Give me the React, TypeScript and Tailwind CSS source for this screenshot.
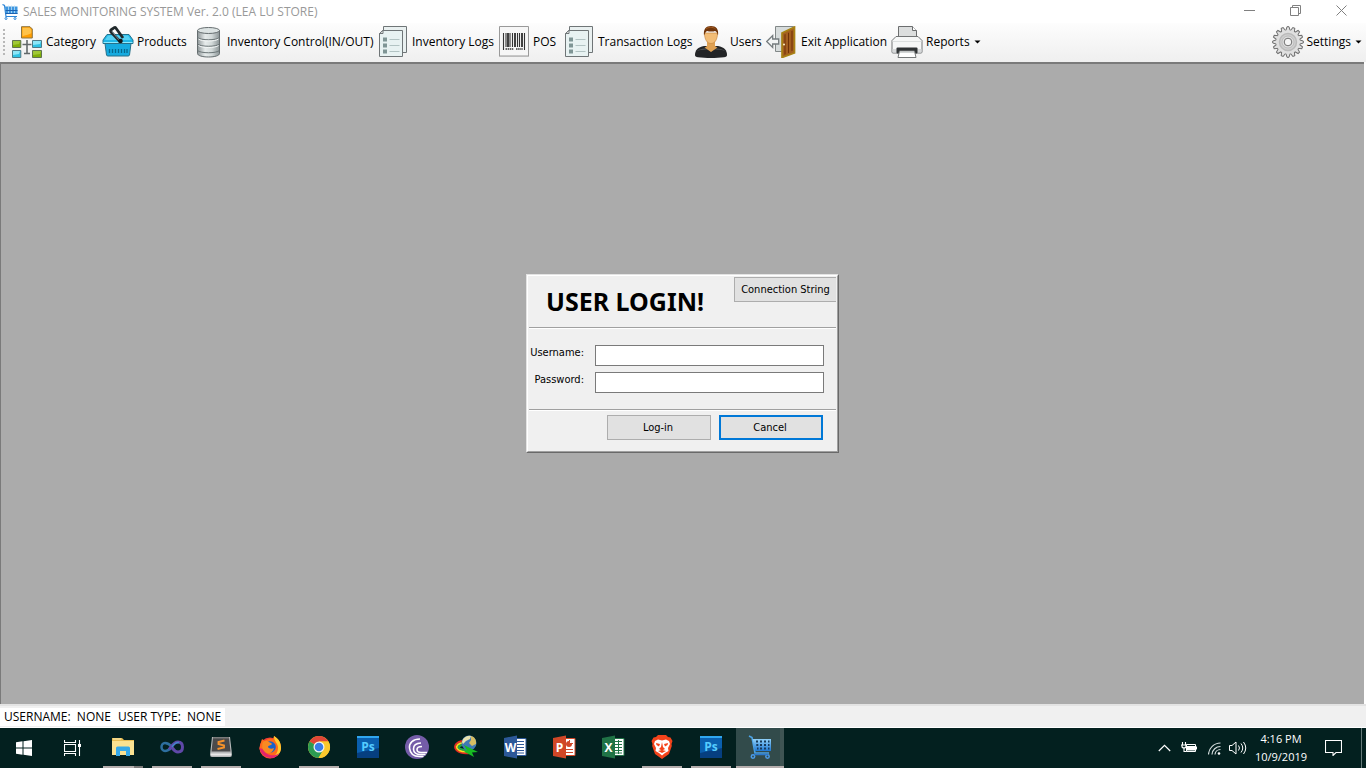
import { useId } from "react";
import type { ReactNode } from "react";

function CartIcon({ size }: { size: number }) {
  const id = useId();
  return (
    <svg width={size} height={size} viewBox="0 0 24 24" fill="none" aria-hidden="true">
      <defs>
        <linearGradient id={id} x1="0" y1="0" x2="0" y2="1">
          <stop offset="0" stopColor="#8fd0f8" />
          <stop offset="1" stopColor="#1f78d4" />
        </linearGradient>
      </defs>
      <path d="M1 1l3 1.500 3 15.500H21" stroke="#4ba3e6" strokeWidth="1.600" />
      <path fill={`url(#${id})`} d="M4.500 4H23v12H6.800z" />
      <path
        d="M8 6.500h2M12 6.500h2M16 6.500h2M20 6.500h1.500M8.300 10h2M12 10h2M16 10h2M20 10h1.500M9 13.500h1.500M12 13.500h2M16 13.500h2M20 13.500h1.500"
        stroke="#173a5c"
        strokeWidth="1.800"
      />
      <circle cx="5" cy="21.500" r="1.700" stroke="#4b9be8" strokeWidth="1.500" />
      <circle cx="19.500" cy="21.500" r="1.700" stroke="#4b9be8" strokeWidth="1.500" />
      <path d="M6 19.500h14" stroke="#2d78ca" strokeWidth="1.500" />
    </svg>
  );
}

function TitleCart() {
  return (
    <svg width="16" height="16" viewBox="0 0 16 16" fill="none" aria-hidden="true">
      <path d="M.5.500l2 1 1.500 11h11" stroke="#2f86d6" strokeWidth="1.200" />
      <path d="M3 2.500h12.500V10H4z" fill="#3f97e0" />
      <path d="M6.500 1.500V10M9.500 1.500V10M12.500 1.500V10" stroke="#b9dcf6" strokeWidth=".8" />
      <path d="M3.500 6.500h12M3.500 9.500h12" stroke="#1d62b0" />
      <circle cx="4" cy="14.500" r="1" stroke="#2f86d6" />
      <circle cx="13" cy="14.500" r="1" stroke="#2f86d6" />
    </svg>
  );
}

function CategoryIcon() {
  return (
    <svg width="32" height="32" viewBox="0 0 32 32" aria-hidden="true">
      <path d="M16 14v14M11.500 18.500h9M13 27.500h6" stroke="#63696b" strokeWidth="1.600" fill="none" />
      <path d="M10.500.700h8.500l2.300 2.300v9h-10.800z" fill="#ff9d00" stroke="#8d7440" />
      <path d="M11.500 1.700h7l1.800 2v3.500c-3 2-6 1.500-8.800 3z" fill="#ffc34a" />
      <g stroke="#5f7350">
        <path d="M1.500 14.500h8.300v7H1.500zM21.500 24.500h9v7h-9z" fill="#7fae08" />
      </g>
      <path d="M2 15h7l-1 3-6 1zM22 25h8l-1 3-7 1z" fill="#9fc836" />
      <g stroke="#4d7a88">
        <path d="M21.500 14.500h9v7h-9zM1.500 24.500h8.300v7H1.500z" fill="#2fc2e4" />
      </g>
      <path d="M22 15h8l-1 3-7 1zM2 25h7l-1 3-6 1z" fill="#8ce6f8" />
    </svg>
  );
}

function BasketIcon() {
  return (
    <svg width="32" height="32" viewBox="0 0 32 32" aria-hidden="true">
      <path d="M5 8.500h22l4 5.500v3.500H1V14z" fill="#20b6e6" stroke="#22738f" />
      <path d="M6 9.500h20l3 4.500H3z" fill="#56d1f3" />
      <path d="M3 17.500h26L27.500 29q-.2 1-1.500 1H6q-1.300 0-1.500-1z" fill="#16abe0" stroke="#27718a" />
      <path d="M1.500 16.500h29" stroke="#8beaff" />
      <path d="M7.500 23v4M10.500 23v4M13.500 23v4M16.500 23v4M19.500 23v4M22.500 23v4M25 23v4" stroke="#07698e" strokeWidth="1.300" />
      <path d="M18 15.500L9 6q-1-1.500.5-2.500L12 1.800q1.200-.7 2 .4L21 12" fill="none" stroke="#20282b" strokeWidth="2.800" strokeLinejoin="round" />
      <path d="M10 5.500l7 8.500" stroke="#75848a" />
      <circle cx="18.500" cy="15" r="2.300" fill="#17191a" />
    </svg>
  );
}

function DatabaseIcon() {
  const id = useId();
  return (
    <svg width="32" height="32" viewBox="0 0 32 32" aria-hidden="true">
      <defs>
        <linearGradient id={id}>
          <stop offset="0" stopColor="#8f9799" />
          <stop offset=".35" stopColor="#e6ebeb" />
          <stop offset=".65" stopColor="#d2d9d9" />
          <stop offset="1" stopColor="#8b9496" />
        </linearGradient>
      </defs>
      <path d="M5.500 4.500v23C5.500 29.500 10 31 16.500 31s11-1.500 11-3.500v-23z" fill={`url(#${id})`} stroke="#656d6f" />
      <ellipse cx="16.500" cy="4.500" rx="11" ry="3" fill="#dce3e3" stroke="#656d6f" />
      <path d="M5.500 11.500c3 3 19 3 22 0M5.500 18c3 3 19 3 22 0M5.500 24.500c3 3 19 3 22 0" fill="none" stroke="#6a7476" />
      <path d="M6.500 13c3 2.700 17 2.700 20 0M6.500 19.500c3 2.700 17 2.700 20 0" fill="none" stroke="#f3f6f6" />
    </svg>
  );
}

function LogsIcon() {
  return (
    <svg width="32" height="32" viewBox="0 0 32 32" aria-hidden="true">
      <path d="M6.500.500h23v26h-23z" fill="#e9f0f0" stroke="#6f7577" />
      <path d="M5.500 4.500h20v26h-23V7.500z" fill="#e8f2f2" stroke="#6f7577" />
      <path d="M2.500 7.500l3.500-3v3z" fill="#fff" stroke="#6f7577" />
      <path d="M6 11.500h4v4H6zM6 17.500h4v4H6zM6 23.500h4v4H6z" fill="#7f9595" />
      <path d="M12.500 13.500h10M12.500 19.500h10M12.500 25.500h10" stroke="#b2c3c3" />
    </svg>
  );
}

function BarcodeIcon() {
  return (
    <svg width="32" height="32" viewBox="0 0 32 32" aria-hidden="true">
      <path d="M1.500.500h29v29.500h-29z" fill="#f6f6f6" stroke="#999" />
      <path d="M1 30.500h30" stroke="#bbb" />
      <path d="M5.500 7v17M8 7v14M12 7v14M14.500 7v14M19.500 7v14M21.500 7v14M26.500 7v17" stroke="#333" strokeWidth="1.100" />
      <path d="M10 7v14M17 7v14M24 7v14" stroke="#222" strokeWidth="1.700" />
      <path d="M7.500 23h8M18 23h7" stroke="#666" strokeWidth="2" strokeDasharray="1.500 .6" />
    </svg>
  );
}

function UserIcon() {
  return (
    <svg width="32" height="32" viewBox="0 0 32 32" aria-hidden="true">
      <path d="M0 29c0-5 3-8 9-9h14c6 1 9 4 9 9 0 1.500-1 2-3 2.300-8 .9-18 .9-26 0C1 31 0 30.500 0 29z" fill="#222426" />
      <path d="M2 25c4-4 24-4 28 0-4-2-24-2-28 0z" fill="#4d5053" />
      <path d="M12 15h8v5c1 1 1.500 1.200 2.500 1.500L16 26l-6.500-4.500c1-.3 1.500-.5 2.500-1.500z" fill="#dfa153" />
      <path d="M9.500 7c0 7 3 10.500 6.500 10.500S22.500 14 22.500 7z" fill="#f2bd77" stroke="#c88a43" strokeWidth=".7" />
      <path d="M9 9.500C8.200 3 11 0 16 0s8 3 7 9.500c-1-3-1.500-4-3-4.500-2 1-6 .500-8 0-1.500 1-2 2-3 4.500z" fill="#70350b" />
      <path d="M11 3c2-2 7-2.500 9.500 0" stroke="#a35b20" fill="none" />
    </svg>
  );
}

function DoorIcon() {
  return (
    <svg width="32" height="32" viewBox="0 0 32 32" aria-hidden="true">
      <path d="M9.500.500h18v25h-18z" fill="#d7dcdc" stroke="#828888" />
      <path d="M.7 15.500l6-6v3.500h6v5h-6v3.500z" fill="#f2f4f4" stroke="#747b7d" strokeWidth="1.300" />
      <path d="M16 7L28.500 1v26L16 31.500z" fill="#a45f20" stroke="#a88214" strokeWidth="1.700" />
      <path d="M18.500 8.500l1-.5v20.300l-1 .4zM22 7l1-.5v20.300l-1 .4zM25.500 5l1-.5v20.300l-1 .4z" fill="#6f3108" />
      <circle cx="18" cy="18.500" r="1" fill="#fff5c4" />
    </svg>
  );
}

function PrinterIcon() {
  return (
    <svg width="32" height="32" viewBox="0 0 32 32" aria-hidden="true">
      <path d="M7.500.500h14l4 4v8h-18z" fill="#dcdede" stroke="#6b6d6e" />
      <path d="M21.500.500v4h4" fill="#fff" stroke="#6b6d6e" />
      <path d="M5 10.500h22l4 4V26q0 1-1 1H2q-1 0-1-1V14.500z" fill="#f6f7f7" stroke="#737576" strokeLinejoin="round" />
      <path d="M1.500 15.500h29" stroke="#dcdfdf" />
      <path d="M1.500 23h29v3.500h-29z" fill="#d7d9da" />
      <rect x="5.500" y="21.500" width="21" height="6" rx="1" fill="#303335" />
      <path d="M8.500 25h15l1.500 6.500H7z" fill="#fff" stroke="#76797a" />
      <path d="M9 26h14" stroke="#c5c8c8" strokeWidth="1.500" />
    </svg>
  );
}

const gearTeeth = Array.from({ length: 16 }, (_, i) => i * 22.5);

function GearIcon() {
  return (
    <svg width="32" height="32" viewBox="0 0 32 32" aria-hidden="true">
      {gearTeeth.map((a) => (
        <path key={a} d="M13.800 4.800L15 .700h2l1.200 4.100" fill="#dfdfdf" stroke="#6f6f6f" transform={`rotate(${a} 16 16)`} />
      ))}
      <circle cx="16" cy="16" r="11.800" fill="#dfdfdf" />
      <circle cx="16" cy="16" r="8.500" fill="#cfcfcf" stroke="#bababa" strokeWidth="1.500" />
      <circle cx="16" cy="16" r="6" fill="#dedede" stroke="#b0b0b0" strokeWidth=".7" />
      <circle cx="16" cy="16" r="3.800" fill="#f5f5f5" stroke="#6f6f6f" />
    </svg>
  );
}

function Caret() {
  return (
    <svg className="ml-1" width="7" height="4" viewBox="0 0 7 4" aria-hidden="true">
      <path d="M.5.500h6l-3 3z" fill="#000" />
    </svg>
  );
}

function ToolButton({ icon, label, width, caret }: { icon: ReactNode; label: string; width: string; caret?: boolean }) {
  return (
    <button type="button" className={`flex h-8 shrink-0 items-center whitespace-nowrap text-left ${width}`}>
      <span className="mr-[3px] shrink-0">{icon}</span>
      {label}
      {caret && <Caret />}
    </button>
  );
}

const tools = [
  { label: "Category", icon: <CategoryIcon />, width: "w-[91px]" },
  { label: "Products", icon: <BasketIcon />, width: "w-[90px]" },
  { label: "Inventory Control(IN/OUT)", icon: <DatabaseIcon />, width: "w-[185px]" },
  { label: "Inventory Logs", icon: <LogsIcon />, width: "w-[121px]" },
  { label: "POS", icon: <BarcodeIcon />, width: "w-[65px]" },
  { label: "Transaction Logs", icon: <LogsIcon />, width: "w-[132px]" },
  { label: "Users", icon: <UserIcon />, width: "w-[71px]" },
  { label: "Exit Application", icon: <DoorIcon />, width: "w-[125px]" },
];

function PhotoshopIcon() {
  return (
    <svg width="22" height="22" viewBox="0 0 22 22" aria-hidden="true">
      <path d="M0 0h22v22H0z" fill="#063f80" />
      <path d="M0 0h22v12L0 17z" fill="#0a5fae" />
      <path d="M0 1h22" stroke="#30a6ee" strokeWidth="2" />
      <text x="11" y="15" textAnchor="middle" fontSize="12" fontWeight="bold" fontFamily="'Open Sans', sans-serif" fill="#55ccff">Ps</text>
    </svg>
  );
}

function OfficeIcon({ letter, dark, children }: { letter: string; dark: string; children: ReactNode }) {
  return (
    <svg width="24" height="24" viewBox="0 0 24 24" aria-hidden="true">
      <path d="M12 3.500h11v17H12z" fill="#fff" stroke={dark} />
      {children}
      <path d="M1 3l13-2.500v23L1 21z" fill={dark} />
      <text x="7.500" y="16.500" textAnchor="middle" fontSize="12" fontWeight="bold" fontFamily="'Open Sans', sans-serif" fill="#fff">{letter}</text>
    </svg>
  );
}

const taskApps: { name: string; icon: ReactNode; running?: boolean; stacked?: boolean; active?: boolean }[] = [
  {
    name: "File Explorer",
    running: true,
    stacked: true,
    icon: (
      <svg width="22" height="20" viewBox="0 0 22 20" aria-hidden="true">
        <path d="M0 1h10l2 2h10v15H0z" fill="#e9bd52" />
        <path d="M0 4h22v14H0z" fill="#fbe291" />
        <path d="M1 2h8" stroke="#fff2bd" />
        <path d="M4 19v-8q0-1.500 1.500-1.500h11q1.500 0 1.500 1.500v8h-4v-5H8v5z" fill="#36a9e8" />
      </svg>
    ),
  },
  {
    name: "Visual Studio",
    running: true,
    icon: (
      <svg width="24" height="14" viewBox="0 0 24 14" fill="none" aria-hidden="true">
        <path d="M12 7C9 3.500 7 3 5 3 2.800 3 1.500 5 1.500 7S3 11 5 11c3 0 5-2 7-4" stroke="#2d6f9f" strokeWidth="2.500" />
        <path d="M9 9.500C11.500 7 13 2 18 2c3 0 4.500 2.200 4.500 5S21 12 18 12c-4 0-5-3.500-7-6" stroke="#5f48a8" strokeWidth="3" />
        <path d="M12 7c2-3 4-5 7-4.500" stroke="#4384cc" strokeWidth="1.500" />
      </svg>
    ),
  },
  {
    name: "Sublime Text",
    running: true,
    icon: (
      <svg width="24" height="22" viewBox="0 0 24 22" aria-hidden="true">
        <path d="M3 1h18l2 17.500q0 2.500-2 2.500H3q-2 0-2-2.500z" fill="#b7b9ba" />
        <path d="M4 1.500h16l1.500 14h-19z" fill="#4a4a4b" />
        <path d="M4 2h16" stroke="#777" />
        <path d="M2 18.500h20" stroke="#e8e8e8" strokeWidth="2" />
        <path d="M15.500 4.500L9.500 6v2l5.500 1.500v2L8.500 13" fill="none" stroke="#f7932a" strokeWidth="1.900" />
      </svg>
    ),
  },
  {
    name: "Firefox",
    icon: (
      <svg width="24" height="24" viewBox="0 0 24 24" aria-hidden="true">
        <circle cx="12" cy="13" r="10.500" fill="#f33b38" />
        <path d="M3 7l1-3 3 2c3-3 6-3 8-2l1-3c5 3 7 7 7 12 0 5-4 9-9 10C7 24 2 19 1.500 13z" fill="#ff6a1b" />
        <path d="M16 1c5 3 7 7 7 12s-4 9-8 9c3-2 5-5 5-9 0-5-4-6-4-12z" fill="#ffcb2e" />
        <circle cx="12" cy="12" r="5.800" fill="#1862cd" />
        <path d="M5 7c2-2 4-2 6 0 1 1 3 1 3 2-1 2-4 1-4 3 1 2 4 2 6 1-1 4-4 6-7 5-4-1-6-6-4-11z" fill="#f98a22" />
        <path d="M1.500 13c1 6 6 10 12 10 3 0 6-2 8-5-5 4-13 3-17-4z" fill="#e5236d" />
      </svg>
    ),
  },
  {
    name: "Chrome",
    running: true,
    icon: (
      <svg width="24" height="24" viewBox="0 0 24 24" aria-hidden="true">
        <circle cx="12" cy="12" r="11" fill="#fbc82d" />
        <path d="M12 12L2.500 6.500A11 11 0 0 1 21.500 6.500H12z" fill="#e04637" />
        <path d="M12 12l-9.500-5.500A11 11 0 0 0 11.500 23l5-8.500z" fill="#2c9b52" />
        <path d="M12 6.500h9.500A11 11 0 0 1 11.500 23l5.500-9z" fill="#fbc82d" />
        <circle cx="12" cy="12" r="5.500" fill="#f5f5f5" />
        <circle cx="12" cy="12" r="4.300" fill="#397de9" />
      </svg>
    ),
  },
  { name: "Photoshop CS6", icon: <PhotoshopIcon /> },
  {
    name: "BitTorrent",
    icon: (
      <svg width="24" height="24" viewBox="0 0 24 24" fill="none" aria-hidden="true">
        <circle cx="12" cy="12" r="12" fill="#745ca8" />
        <path d="M15 4C8 4 4 8 4.500 13c.5 5 4 8.500 10 8.500h4M16 8c-5 0-7.500 2.500-7.500 6s3 5.500 7 5.500h5M17 11.500c-3 0-5 1-5 3s2 3 4 3h6" stroke="#fff" strokeWidth="1.600" />
      </svg>
    ),
  },
  {
    name: "Internet Download Manager",
    icon: (
      <svg width="24" height="24" viewBox="0 0 24 24" fill="none" aria-hidden="true">
        <path d="M8 6C3 7 0 10 1.500 13.500c2 4 8 5.500 14 4.500" stroke="#e42b23" strokeWidth="2" />
        <path d="M8 8c-4 1-6 3-5 5 2 3 7 4 12 3" stroke="#f7db20" strokeWidth="2" />
        <path d="M8 10c-3 1-4 2-3 3 2 2 5 2 9 2" stroke="#24a84a" strokeWidth="2" />
        <circle cx="15" cy="8" r="7.500" fill="#3f78b5" />
        <path d="M9 4c3-3 5-3.500 8-3l-1 3-4 2-3 3-1-2z" fill="#e9e3b0" />
        <path d="M17 1c4 1 5.500 4 5 8l-4 2-3-3 2-3z" fill="#d6bc62" />
        <path d="M10 10l14 7-6 .5 2 4.500-10-5.500 3-1z" fill="#17bd22" />
      </svg>
    ),
  },
  {
    name: "Word",
    icon: (
      <OfficeIcon letter="W" dark="#2c5898">
        <path d="M14 6.500h7M14 9.500h7M14 12.500h7M14 15.500h7M14 18h7" stroke="#2c5898" />
      </OfficeIcon>
    ),
  },
  {
    name: "PowerPoint",
    icon: (
      <OfficeIcon letter="P" dark="#d04727">
        <circle cx="17" cy="9" r="3" fill="#d04727" />
        <path d="M17.500 5v3.500H21M14 14.500h7M14 17.500h7" stroke="#d04727" fill="#fff" />
      </OfficeIcon>
    ),
  },
  {
    name: "Excel",
    icon: (
      <OfficeIcon letter="X" dark="#207346">
        <path d="M14 6.500h7M14 9.500h7M14 12.500h7M14 15.500h7M14 18h7M17.500 5v14" stroke="#207346" />
      </OfficeIcon>
    ),
  },
  {
    name: "Brave",
    running: true,
    icon: (
      <svg width="22" height="24" viewBox="0 0 22 24" aria-hidden="true">
        <path d="M5 2L7 0h8l2 2 2.500.500L21.500 6l-1 3 .3 2L18 19l-7 5-7-5L1.200 11l.3-2-1-3 2-3.500z" fill="#f4431b" />
        <path d="M4 6l3-1.500 4 1 4-1L18 6l1 3-2 4 .5 3-3.500 2-3 2.500L8 18l-3.500-2L5 13 3 9z" fill="#fff" />
        <path d="M5 8l4 1-1 2.500L5.500 10zM17 8l-4 1 1 2.500 2.500-1.500zM11 7l1 5 2 2-3 1.500L8 14l2-2zM7 16l4-1 4 1-4 2z" fill="#f4431b" />
      </svg>
    ),
  },
  { name: "Photoshop", running: true, icon: <PhotoshopIcon /> },
  { name: "Sales Monitoring System", running: true, active: true, icon: <CartIcon size={24} /> },
];

function Rule() {
  return <div className="h-[2px] border-t border-[#a0a0a0] bg-white" />;
}

function LoginDialog() {
  return (
    <form
      aria-label="User login"
      className="w-[313px] border border-t-[#e3e3e3] border-r-[#696969] border-b-[#696969] border-l-[#e3e3e3] font-['DejaVu_Sans_Condensed','DejaVu_Sans',sans-serif] text-[11px] leading-[14px]"
      onSubmit={(e) => e.preventDefault()}
    >
      <div className="border border-t-white border-r-[#a0a0a0] border-b-[#a0a0a0] border-l-white bg-[#f0f0f0] p-px">
        <div className="flex h-[50px] items-start justify-between pl-[17px]">
          <h1 className="pt-2 font-['Noto_Sans',sans-serif] text-[25px] leading-8 font-bold whitespace-nowrap">USER LOGIN!</h1>
          <button type="button" className="h-[25px] w-[102px] border border-r-0 border-[#adadad] bg-[#e1e1e1] pt-px whitespace-nowrap">
            Connection String
          </button>
        </div>
        <Rule />
        <div className="flex h-20 flex-col gap-[6px] pt-4 pr-3">
          <div className="flex gap-[11px]">
            <label htmlFor="username" className="flex w-[55px] justify-end pt-px">Username:</label>
            <input id="username" type="text" className="h-[21px] min-w-0 flex-1 border border-[#7a7a7a] bg-white px-1 outline-none" />
          </div>
          <div className="flex gap-[11px]">
            <label htmlFor="password" className="flex w-[55px] justify-end pt-px">Password:</label>
            <input id="password" type="password" className="h-[21px] min-w-0 flex-1 border border-[#7a7a7a] bg-white px-1 outline-none" />
          </div>
        </div>
        <Rule />
        <div className="flex h-[39px] justify-end gap-2 pt-1 pr-[13px]">
          <button type="submit" className="h-[25px] w-[104px] border border-[#adadad] bg-[#e1e1e1] pt-px pr-[2px]">Log-in</button>
          <button type="button" className="h-[25px] w-[104px] border-2 border-[#0078d7] bg-[#e1e1e1] pt-px pr-[2px]">Cancel</button>
        </div>
      </div>
    </form>
  );
}

function Taskbar() {
  return (
    <footer className="flex h-10 shrink-0 overflow-hidden bg-[#03201f] text-white">
      <button type="button" aria-label="Start" className="flex w-12 items-center justify-center">
        <svg width="16" height="16" viewBox="0 0 16 16" fill="#fff" aria-hidden="true">
          <path d="M0 2.300l6.500-1v6.200H0zM7.500 1.200L16 0v7.500H7.500zM0 8.500h6.500v6.200L0 13.700zM7.500 8.500H16V16l-8.500-1.200z" />
        </svg>
      </button>
      <button type="button" aria-label="Task View" className="flex w-[50px] items-center justify-center pr-[2px]">
        <svg width="17" height="16" viewBox="0 0 17 16" fill="none" stroke="#fff" aria-hidden="true">
          <path d="M.5 0v2.500h11V0M.5 16v-2.500h11V16M.5 4.500h11v7H.5zM15.500 0v16" strokeWidth="1.100" />
          <path d="M14 4h3v3h-3z" fill="#fff" stroke="none" />
        </svg>
      </button>
      {taskApps.map((app) => (
        <button key={app.name} type="button" aria-label={app.name} className="flex w-[49px] flex-col">
          <span className={app.active ? "ml-px flex h-[38px] w-12 items-center justify-center border-r-4 border-[#3f5453] bg-[#324b4b] pl-1" : "flex h-[38px] w-full items-center justify-center"}>
            {app.icon}
          </span>
          {app.running && (
            <span className={app.active ? "ml-px h-[2px] w-12 bg-[#b5aead]" : "mx-auto flex h-[2px] w-10 justify-end bg-[#b5aead]"}>
              {app.stacked && <span className="h-[2px] w-[9px] bg-[#7b7a79]" />}
            </span>
          )}
        </button>
      ))}
      <div className="ml-auto flex items-center">
        <button type="button" aria-label="Show hidden icons" className="mr-[10px]">
          <svg width="13" height="8" viewBox="0 0 13 8" fill="none" stroke="#fff" strokeWidth="1.200" aria-hidden="true"><path d="M.8 7l5.700-5.700L12.200 7" /></svg>
        </button>
        <button type="button" aria-label="Battery" className="mr-[10px]">
          <svg width="17" height="12" viewBox="0 0 17 12" fill="none" stroke="#fff" aria-hidden="true">
            <path d="M5.500 2.500h9v7h-9zM15.500 4.500v3" />
            <path d="M6 4h8v4.500H6z" fill="#fff" stroke="none" />
            <path d="M1.500 0v2.500M4.500 0v2.500M0 3h6M1 3v2q2 2 4 0V3M3 6v3.500h2.500" strokeWidth="1.100" />
          </svg>
        </button>
        <button type="button" aria-label="Network" className="mr-2">
          <svg width="13" height="13" viewBox="0 0 13 13" fill="none" stroke="#d5dddd" strokeWidth="1.200" aria-hidden="true">
            <path d="M.5 12.500A12 12 0 0 1 12.500 1M4 12.500A8.500 8.500 0 0 1 12.500 4.500M7 12.500A5.500 5.500 0 0 1 12.500 7.500" />
            <circle cx="11" cy="11.500" r="1.300" fill="#fff" stroke="none" />
          </svg>
        </button>
        <button type="button" aria-label="Volume" className="mr-1">
          <svg width="18" height="14" viewBox="0 0 18 14" fill="none" stroke="#fff" aria-hidden="true">
            <path d="M.5 4.500h2.500l4-3.500v12l-4-3.500H.5z" />
            <path d="M9.500 4.500q2 2.500 0 5M12 2.500q3.500 4.500 0 9M14.500 1q4.500 6 0 12" />
          </svg>
        </button>
        <time className="w-[60px] pb-px text-center font-['Open_Sans','Noto_Sans',sans-serif] text-[11px] leading-[18px]">
          4:16 PM
          <br />
          10/9/2019
        </time>
        <button type="button" aria-label="Notifications" className="mr-[19px] ml-[14px]">
          <svg width="17" height="16" viewBox="0 0 17 16" fill="none" stroke="#fff" strokeWidth="1.100" aria-hidden="true"><path d="M.5.500h16v12h-5.500l-3 3v-3H.5z" /></svg>
        </button>
        <div className="mr-1 h-10 w-px bg-[#657a79]" />
      </div>
    </footer>
  );
}

export default function App() {
  return (
    <div className="flex min-h-screen flex-col bg-white pr-px font-['Open_Sans','Noto_Sans',sans-serif] text-[12px] text-black">
      <header className="flex h-[23px] shrink-0 items-center pl-[2px]">
        <TitleCart />
        <span className="ml-[5px] text-[#999999]">SALES MONITORING SYSTEM Ver. 2.0 (LEA LU STORE)</span>
        <div className="ml-auto flex pr-[2px] pb-[2px]">
          <button type="button" aria-label="Minimize" className="flex w-[46px] items-center justify-center">
            <svg width="11" height="11" viewBox="0 0 11 11" stroke="#808080" aria-hidden="true"><path d="M0 5.500h11" /></svg>
          </button>
          <button type="button" aria-label="Restore" className="flex w-[46px] items-center justify-center">
            <svg width="11" height="11" viewBox="0 0 11 11" fill="none" stroke="#808080" aria-hidden="true"><path d="M.5 2.500h8v8h-8zM2.500 2.500v-2h8v8h-2" /></svg>
          </button>
          <button type="button" aria-label="Close" className="flex w-[46px] items-center justify-center">
            <svg width="11" height="11" viewBox="0 0 11 11" stroke="#808080" aria-hidden="true"><path d="M.5.500l10 10M10.500.500l-10 10" /></svg>
          </button>
        </div>
      </header>

      <nav className="flex h-[39px] shrink-0 items-center bg-linear-to-b from-[#fdfdfd] to-[#efefef] pb-[2px] pl-[3px]">
        <svg className="mr-[6px]" width="2" height="28" viewBox="0 0 2 28" aria-hidden="true"><path d="M1 1v27" stroke="#b8b8b8" strokeWidth="2" strokeDasharray="2 2" /></svg>
        {tools.map((t) => (
          <ToolButton key={t.label} {...t} />
        ))}
        <ToolButton label="Reports" icon={<PrinterIcon />} width="" caret />
        <div className="mr-1 ml-auto">
          <ToolButton label="Settings" icon={<GearIcon />} width="" caret />
        </div>
      </nav>

      <main className="mr-[2px] flex flex-1 items-center justify-center border-t-2 border-l border-[#7a7a7a] bg-[#ababab] pb-[42px]">
        <LoginDialog />
      </main>

      <div className="flex h-6 shrink-0 items-end border-t-2 border-b border-t-[#e3e3e3] border-b-white bg-[#f0f0f0] pb-px">
        <div className="flex h-[18px] items-center bg-white px-1 whitespace-pre">
          <span>USERNAME:  NONE</span>
          <span className="ml-[7px]">USER TYPE:  NONE</span>
        </div>
      </div>
      <Taskbar />
    </div>
  );
}
